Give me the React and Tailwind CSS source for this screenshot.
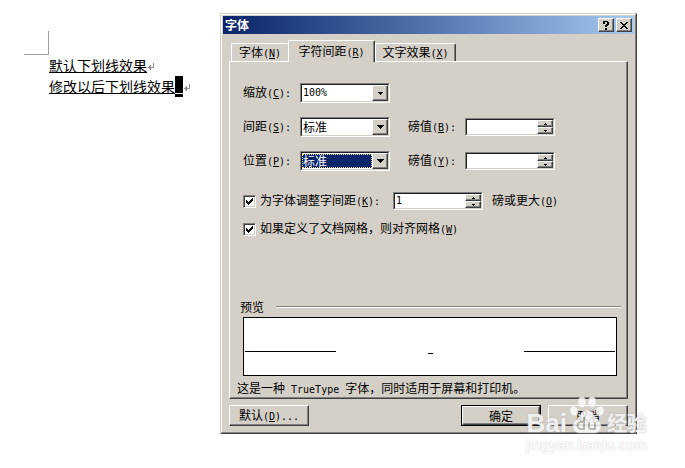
import React, { useState } from "react";

const sunken =
  "border border-t-[#808080] border-l-[#808080] border-r-white border-b-white bg-white";
const sunkenInner =
  "border border-t-[#202020] border-l-[#202020] border-r-[#d4d0c8] border-b-[#d4d0c8]";
const raised =
  "bg-[#d4d0c8] border border-t-white border-l-white border-r-[#404040] border-b-[#404040] shadow-[inset_-1px_-1px_0_#808080]";

// Half-width latin text, 6px per character
function Latin({ children }) {
  return <span className="font-['DejaVu_Sans_Mono',monospace] text-[10px] whitespace-pre">{children}</span>;
}

function Key({ k, after = "" }) {
  return (
    <Latin>
      (<u>{k}</u>){after}
    </Latin>
  );
}

function Triangle({ up, small }) {
  const d = small ? "M0 0h3v1H2v1H1V1H0z" : "M0 0h7v1H6v1H5v1H4v1H3V3H2V2H1V1H0z";
  return (
    <svg
      aria-hidden="true"
      width={small ? 3 : 7}
      height={small ? 2 : 4}
      viewBox={small ? "0 0 3 2" : "0 0 7 4"}
      shapeRendering="crispEdges"
      className={up ? "rotate-180" : ""}
    >
      <path d={d} fill="#000" />
    </svg>
  );
}

function Combo({ id, options, focused, small }) {
  return (
    <div className={`relative h-5 w-[90px] shrink-0 ${sunken}`}>
      <div className={`h-full pr-4 ${sunkenInner} ${focused ? "py-px" : ""}`}>
        <select
          id={id}
          className={`block h-full w-full appearance-none leading-3 outline-none ${
            focused ? "border border-dotted border-[#f5db95] bg-[#0a246a] text-white" : "bg-white pl-px text-black"
          } ${small ? "font-['DejaVu_Sans_Mono',monospace] text-[10px]" : "text-[12px]"}`}
        >
          {options.map((o) => (
            <option key={o}>{o}</option>
          ))}
        </select>
      </div>
      <span
        className={`pointer-events-none absolute top-px right-px bottom-px flex w-4 items-center justify-center ${raised}`}
      >
        {small ? (
          <svg aria-hidden="true" width="5" height="3" viewBox="0 0 5 3" shapeRendering="crispEdges">
            <path d="M0 0h5v1H4v1H3v1H2V2H1V1H0z" />
          </svg>
        ) : (
          <Triangle />
        )}
      </span>
    </div>
  );
}

function Spinner({ id, initial = "" }) {
  const [value, setValue] = useState(initial);
  const step = (n) => setValue(String(Math.max(0, Number(value || 0) + n)));
  return (
    <div className={`h-[18px] w-[90px] shrink-0 ${sunken}`}>
      <div className={`flex h-full ${sunkenInner}`}>
        <input
          id={id}
          type="text"
          value={value}
          onChange={(e) => setValue(e.target.value)}
          className="w-full min-w-0 flex-1 bg-white pl-px font-['DejaVu_Sans_Mono',monospace] text-[10px] outline-none"
        />
        <div className="flex w-4 flex-col">
          <button
            type="button"
            aria-label="+"
            onClick={() => step(1)}
            className={`flex flex-1 items-center justify-center ${raised}`}
          >
            <Triangle up small />
          </button>
          <button
            type="button"
            aria-label="-"
            onClick={() => step(-1)}
            className={`flex flex-1 items-center justify-center ${raised}`}
          >
            <Triangle small />
          </button>
        </div>
      </div>
    </div>
  );
}

function Check({ id }) {
  return (
    <span className="grid size-[13px] shrink-0">
      <input
        id={id}
        type="checkbox"
        defaultChecked
        className="peer col-start-1 row-start-1 size-[13px] appearance-none border border-t-[#808080] border-r-white border-b-white border-l-[#808080] bg-white shadow-[inset_1px_1px_0_#404040,inset_-1px_-1px_0_#d4d0c8]"
      />
      <svg
        aria-hidden="true"
        viewBox="0 0 13 13"
        shapeRendering="crispEdges"
        className="pointer-events-none invisible col-start-1 row-start-1 size-[13px] peer-checked:visible"
      >
        <path d="M3 5h1v1h1v1h1V6h1V5h1V4h1V3h1v3H9v1H8v1H7v1H6v1H5V9H4V8H3z" fill="#000" />
      </svg>
    </span>
  );
}

function ParagraphMark() {
  return (
    <svg aria-hidden="true" width="8" height="8" viewBox="0 0 8 8" className="mt-1" fill="none" stroke="#8c8c8c">
      <path d="M6.5 0v4.500H1" />
      <path d="M3.500 2v5M2.500 3v3M1.500 4v1" />
    </svg>
  );
}

function Document() {
  return (
    <section className="w-[220px] shrink-0 pt-[31px] text-[14px]">
      <div className="ml-6 h-6 w-[25px] border-r border-b border-[#a0a0a0]" />
      <div className="ml-[49px]">
        <p className="flex h-[21px] items-start">
          <span className="h-[18px] border-b border-black leading-5">默认下划线效果</span>
          <span className="pt-1"><ParagraphMark /></span>
        </p>
        <p className="flex h-[21px] items-start">
          <span className="h-[18px] border-b border-black leading-5">修改以后下划线效果</span>
          <span className="flex h-[21px] w-2 flex-col justify-end bg-black pb-[3px]">
            <span className="h-px bg-white" />
          </span>
          <span className="pt-1"><ParagraphMark /></span>
        </p>
      </div>
    </section>
  );
}

function TitleBar() {
  return (
    <header className="flex h-[18px] items-center gap-[2px] bg-linear-to-r from-[#0a246a] to-[#a6caf0] pr-[2px] pl-[2px]">
      <h1 className="flex-1 text-[12px] leading-4 font-bold text-white">字体</h1>
      <button type="button" aria-label="帮助" className={`flex h-[14px] w-4 items-center justify-center ${raised}`}>
        <svg width="8" height="9" viewBox="0 0 8 9" shapeRendering="crispEdges">
          <path d="M1 0h5v1h1v3H6v1H5v1H3V4h1V3h1V1H3v2H1zM3 7h2v2H3z" />
        </svg>
      </button>
      <button type="button" aria-label="关闭" className={`flex h-[14px] w-4 items-center justify-center ${raised}`}>
        <svg width="8" height="7" viewBox="0 0 8 7" shapeRendering="crispEdges">
          <path d="M0 0h2v1h1v1h2V1h1V0h2v1H7v1H6v1H5v1h1v1h1v1h1v1H6V6H5V5H3v1H2v1H0V6h1V5h1V4h1V3H2V2H1V1H0z" />
        </svg>
      </button>
    </header>
  );
}

const tabBase =
  "rounded-t-[2px] border-t border-l border-r border-t-white border-l-white border-r-[#404040] bg-[#d4d0c8] shadow-[inset_-1px_0_0_#808080]";

function Tabs() {
  return (
    <div role="tablist" className="flex items-end px-2 pt-[6px]">
      <button type="button" role="tab" aria-selected="false" className="h-[18px] w-[57px] rounded-t-[2px] border-t border-l border-white leading-4">
        字体<Key k="N" />
      </button>
      <button type="button" role="tab" aria-selected="true" className={`relative -mb-px h-[22px] w-[87px] leading-4 ${tabBase}`}>
        字符间距<Key k="R" />
      </button>
      <button type="button" role="tab" aria-selected="false" className={`h-[18px] w-[81px] leading-4 ${tabBase}`}>
        文字效果<Key k="X" />
      </button>
    </div>
  );
}

function Preview() {
  return (
    <div className="flex h-[59px] items-center justify-between border border-black bg-white px-px pt-[10px]">
      <span className="h-px w-[91px] bg-black" />
      <span className="mt-[3px] h-px w-[5px] bg-black" />
      <span className="h-px w-[91px] bg-black" />
    </div>
  );
}

function SpacingPanel() {
  return (
    <div
      role="tabpanel"
      className="mx-[6px] border border-t-white border-r-[#404040] border-b-[#404040] border-l-white pt-[21px] pb-[2px] shadow-[inset_-1px_-1px_0_#808080]"
    >
      <div className="flex flex-col gap-[14px] pl-[13px]">
        <div className="flex h-5 items-center">
          <label htmlFor="scale" className="w-[57px]">缩放<Key k="C" after=":" /></label>
          <Combo id="scale" small options={["100%", "150%", "200%"]} />
        </div>
        <div className="flex h-5 items-center">
          <label htmlFor="spacing" className="w-[57px]">间距<Key k="S" after=":" /></label>
          <Combo id="spacing" options={["标准", "加宽", "紧缩"]} />
          <label htmlFor="spacing-by" className="ml-[18px] w-[57px]">磅值<Key k="B" after=":" /></label>
          <Spinner id="spacing-by" />
        </div>
        <div className="flex h-5 items-center">
          <label htmlFor="position" className="w-[57px]">位置<Key k="P" after=":" /></label>
          <Combo id="position" focused options={["标准", "提升", "降低"]} />
          <label htmlFor="position-by" className="ml-[18px] w-[57px]">磅值<Key k="Y" after=":" /></label>
          <Spinner id="position-by" />
        </div>
      </div>

      <div className="mt-5 flex flex-col gap-2 pl-[13px]">
        <div className="flex h-5 items-center">
          <Check id="kerning" />
          <label htmlFor="kerning" className="ml-1 w-[133px]">为字体调整字间距<Key k="K" after=":" /></label>
          <Spinner id="kerning-from" initial="1" />
          <label htmlFor="kerning-from" className="ml-[9px]">磅或更大<Key k="O" /></label>
        </div>
        <div className="flex h-5 items-center">
          <Check id="grid" />
          <label htmlFor="grid" className="ml-1">如果定义了文档网格，则对齐网格<Key k="W" /></label>
        </div>
      </div>

      <div className="mt-[60px] flex h-4 items-center gap-3 pr-[6px] pl-[10px]">
        <h2>预览</h2>
        <hr className="h-[2px] flex-1 border-t border-b border-t-[#808080] border-b-white" />
      </div>
      <div className="mt-[2px] pr-[10px] pl-[13px]">
        <Preview />
      </div>
      <p className="mt-1 h-4 pl-[7px]">
        这是一种<Latin> TrueType </Latin>字体，同时适用于屏幕和打印机。
      </p>
    </div>
  );
}

function Watermark() {
  return (
    <div className="pointer-events-none absolute right-[38px] bottom-[13px] flex flex-col items-end text-white/80">
      <div className="flex items-end gap-[2px] [text-shadow:0_0_2px_#b0b0b0]">
        <span className="font-['Liberation_Sans',sans-serif] text-[26px] leading-6 font-bold">Bai</span>
        <svg width="36" height="38" viewBox="0 0 36 38" className="mb-px opacity-80">
          <g fill="#fff" stroke="#cfcfcf" strokeWidth="0.5">
            <ellipse cx="5" cy="15" rx="4" ry="5" transform="rotate(-15 5 15)" />
            <ellipse cx="13" cy="6" rx="4" ry="5.500" />
            <ellipse cx="23" cy="6" rx="4" ry="5.500" />
            <ellipse cx="31" cy="15" rx="4" ry="5" transform="rotate(15 31 15)" />
            <path d="M18 14c5 0 6 5 10 9 4 3 5 7 3 11-2 4-7 3-13 3s-11 1-13-3c-2-4-1-8 3-11 4-4 5-9 10-9z" />
          </g>
          <g fill="none" stroke="#b8b4ae" strokeWidth="2">
            <path d="M15 21v12h-3a3 3 0 0 1 0-7h3M20 26v5q0 2 2 2h4v-7" />
          </g>
        </svg>
        <span className="text-[20px] leading-6 font-bold">经验</span>
      </div>
      <span className="font-['Liberation_Sans',sans-serif] text-[15px] leading-5 text-white [text-shadow:0_0_2px_#c4c4c4]">
        jingyan.baidu.com
      </span>
    </div>
  );
}

export default function App() {
  return (
    <main className="relative flex items-start bg-white pb-[34px] font-['Noto_Sans_CJK_SC',sans-serif] text-[12px] leading-4 text-black">
      <Document />
      <div
        role="dialog"
        aria-label="字体"
        className="mt-[13px] mr-12 min-w-0 flex-1 border border-t-[#d4d0c8] border-r-[#404040] border-b-[#404040] border-l-[#d4d0c8] bg-[#d4d0c8]"
      >
        <div className="border border-t-white border-r-[#808080] border-b-[#808080] border-l-white p-px">
          <TitleBar />
          <Tabs />
          <SpacingPanel />
          <footer className="mx-[6px] mt-[6px] mb-[5px] flex gap-[7px]">
            <button type="button" className={`mr-auto h-[21px] w-20 ${raised}`}>
              默认<Key k="D" after="..." />
            </button>
            <button type="button" className="h-[21px] w-20 border border-black">
              <span className={`flex h-full items-center justify-center ${raised}`}>确定</span>
            </button>
            <button type="button" className={`h-[21px] w-20 ${raised}`}>取消</button>
          </footer>
        </div>
      </div>
      <Watermark />
    </main>
  );
}
